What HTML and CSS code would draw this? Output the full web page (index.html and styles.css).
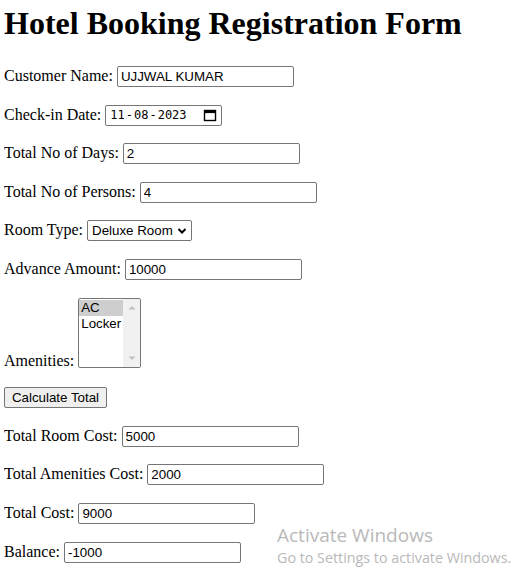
FILE: index.html
```html
<!DOCTYPE html>
<html>
<head>
<meta charset="utf-8">
<title>Hotel Booking Registration Form</title>
<link rel="stylesheet" href="styles.css">
</head>
<body>
<h1 class="title">Hotel Booking Registration Form</h1>
<form class="form">
  <p>Customer Name: <input class="field" type="text" value="UJJWAL KUMAR"></p>
  <p>Check-in Date: <span class="date"><span class="date-text">11<span class="sep">-</span>08<span class="sep">-</span>2023</span><svg class="cal" width="14" height="14" viewBox="0 0 14 14"><rect x="1.5" y="2.5" width="11" height="10" fill="none" stroke="#000" stroke-width="1.4"/><rect x="1.5" y="2.5" width="11" height="2.6" fill="#000"/></svg></span></p>
  <p>Total No of Days: <input class="field" type="text" value="2"></p>
  <p>Total No of Persons: <input class="field" type="text" value="4"></p>
  <p>Room Type: <span class="select"><span>Deluxe Room</span><svg width="10" height="8" viewBox="0 0 10 8"><path d="M1.5 2 L5 5.5 L8.5 2" fill="none" stroke="#000" stroke-width="2"/></svg></span></p>
  <p>Advance Amount: <input class="field" type="text" value="10000"></p>
  <p>Amenities: <span class="listbox"><span class="listbox-inner"><span class="options"><span class="opt sel">AC</span><span class="opt">Locker</span></span><span class="scroll"><svg width="8" height="5" viewBox="0 0 8 5"><path d="M0.5 4.5 L4 1 L7.5 4.5Z" fill="#c1c1c1"/></svg><svg width="8" height="5" viewBox="0 0 8 5"><path d="M0.5 0.5 L4 4 L7.5 0.5Z" fill="#c1c1c1"/></svg></span></span></span></p>
  <p><button class="btn" type="button">Calculate Total</button></p>
  <p>Total Room Cost: <input class="field" type="text" value="5000"></p>
  <p>Total Amenities Cost: <input class="field" type="text" value="2000"></p>
  <p>Total Cost: <input class="field" type="text" value="9000"></p>
  <p>Balance: <input class="field" type="text" value="-1000"></p>
</form>
<div class="watermark">
  <div class="wm-title">Activate Windows</div>
  <div class="wm-sub">Go to Settings to activate Windows.</div>
</div>
</body>
</html>
```
FILE: styles.css
```css
html, body {
  background: #fff;
}
body {
  margin: 0 4px;
  font-family: "Liberation Serif", "Times New Roman", serif;
  font-size: 16px;
  color: #000;
  overflow: hidden;
}
.title {
  font-size: 32px;
  font-weight: bold;
  margin: 5px 0 24px;
}
.form p {
  margin: 17.6px 0;
}
.field {
  box-sizing: border-box;
  width: 177px;
  height: 21px;
  padding: 1px 3px;
  border: 1px solid #767676;
  border-radius: 2px;
  font-family: "Liberation Sans", Arial, sans-serif;
  font-size: 13.33px;
  color: #000;
  vertical-align: baseline;
}
.date {
  display: inline-flex;
  align-items: center;
  justify-content: space-between;
  box-sizing: border-box;
  width: 117px;
  height: 21px;
  padding: 0 4px 0 4px;
  border: 1px solid #767676;
  border-radius: 2px;
}
.date-text {
  font-family: "DejaVu Sans Mono", "Liberation Mono", monospace;
  font-size: 12px;
}
.sep {
  margin: 0 1px;
}
.cal {
  display: block;
}
.select {
  display: inline-flex;
  align-items: center;
  gap: 4px;
  box-sizing: border-box;
  width: 105px;
  height: 21px;
  padding: 0 3px 0 4px;
  border: 1px solid #767676;
  border-radius: 2px;
  font-family: "Liberation Sans", Arial, sans-serif;
  font-size: 13.33px;
}
.listbox {
  display: inline-block;
  box-sizing: border-box;
  width: 63px;
  height: 70px;
  border: 1px solid #767676;
  border-radius: 2px;
  font-family: "Liberation Sans", Arial, sans-serif;
  font-size: 13.33px;
  vertical-align: -2px;
  overflow: hidden;
}
.listbox-inner {
  display: flex;
  height: 100%;
}
.options {
  flex: 1;
  display: flex;
  flex-direction: column;
  padding-top: 1px;
}
.opt {
  padding: 0 2px;
  line-height: 16px;
}
.opt.sel {
  background: #cecece;
}
.scroll {
  width: 17px;
  background: #f1f1f1;
  display: flex;
  flex-direction: column;
  justify-content: space-between;
  align-items: center;
  padding: 6px 0;
}
.btn {
  box-sizing: border-box;
  height: 21px;
  width: 103px;
  padding: 1px 6px;
  border: 1px solid #767676;
  border-radius: 2px;
  background: #efefef;
  font-family: "Liberation Sans", Arial, sans-serif;
  font-size: 13.33px;
  color: #000;
}
.watermark {
  position: absolute;
  left: 277px;
  top: 523px;
  color: #b9b9b9;
  font-family: "Open Sans", "Noto Sans", sans-serif;
}
.wm-title {
  font-size: 19px;
  line-height: 25px;
}
.wm-sub {
  font-size: 14.3px;
  line-height: 20px;
}
```
